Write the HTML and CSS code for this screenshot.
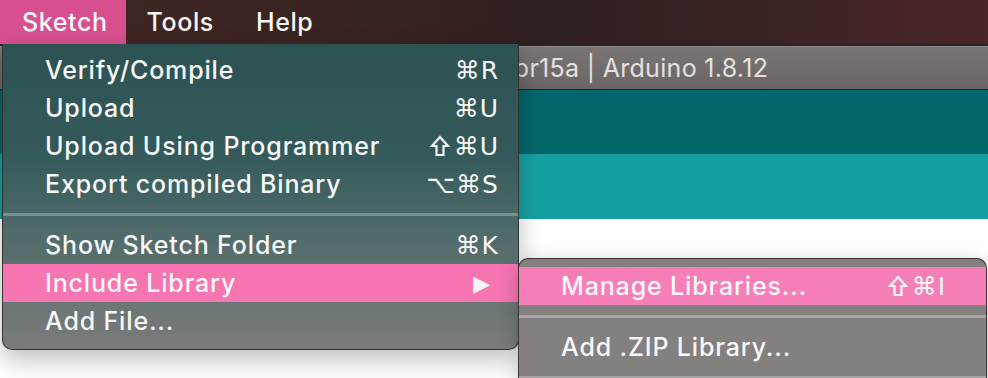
FILE: index.html
```html
<!DOCTYPE html>
<html lang="en">
<head>
  <meta charset="UTF-8">
  <title>Sketch menu | Arduino 1.8.12</title>
  <link rel="stylesheet" href="styles.css">
</head>
<body>

<div class="menubar">
  <span class="menu-title active">Sketch</span>
  <span class="menu-title">Tools</span>
  <span class="menu-title">Help</span>
</div>

<!-- the Arduino IDE window behind the menus -->
<div class="window">
  <div class="titlebar"><span class="title-text">sketch_apr15a | Arduino 1.8.12</span></div>
  <div class="toolbar"></div>
  <div class="tabs"></div>
  <div class="editor"></div>
</div>

<div class="dropdown main-menu">
  <div class="item"><span>Verify/Compile</span><span class="keys">⌘R</span></div>
  <div class="item"><span>Upload</span><span class="keys">⌘U</span></div>
  <div class="item">
    <span>Upload Using Programmer</span>
    <span class="keys"><svg class="shift" viewBox="0 0 20 22"><path d="M10 2 L18 11 H13.5 V20 H6.5 V11 H2 Z" /></svg>⌘U</span>
  </div>
  <div class="item"><span>Export compiled Binary</span><span class="keys">⌥⌘S</span></div>
  <div class="separator"></div>
  <div class="item"><span>Show Sketch Folder</span><span class="keys">⌘K</span></div>
  <div class="item selected"><span>Include Library</span><span class="arrow">▶</span></div>
  <div class="item"><span>Add File...</span></div>
</div>

<div class="dropdown sub-menu">
  <div class="item selected">
    <span>Manage Libraries...</span>
    <span class="keys"><svg class="shift" viewBox="0 0 20 22"><path d="M10 2 L18 11 H13.5 V20 H6.5 V11 H2 Z" /></svg>⌘I</span>
  </div>
  <div class="separator"></div>
  <div class="item"><span>Add .ZIP Library...</span></div>
  <div class="separator"></div>
</div>

</body>
</html>
```

FILE: styles.css
```css
body {
  margin: 0;
  width: 988px;
  height: 378px;
  overflow: hidden;
  position: relative;
  background: #fff;
  font-family: 'Inter', 'Liberation Sans', sans-serif;
  color: #f7f7f7;
}
.menubar {
  height: 44px;
  display: flex;
  align-items: stretch;
  background: linear-gradient(90deg, #422824 0%, #35221f 45%, #2c201f 55%, #4a2626 100%);
  font-size: 25px;
  font-weight: 500;
  letter-spacing: 0.6px;
}
.menu-title {
  display: flex;
  align-items: center;
  padding: 0 21px;
}
.menu-title.active {
  background: #d84f8f;
  padding: 0 18px 0 22px;
}
.window {
  border-top: 2px solid #2a2222;
}
.titlebar {
  height: 42px;
  background: linear-gradient(#7a7574, #6a6665);
  border-top: 1px solid #8e8a89;
  border-bottom: 1px solid #222;
  display: flex;
  align-items: center;
  padding-left: 408px;
  color: #e4e0df;
  font-size: 25px;
  letter-spacing: 0.3px;
  white-space: nowrap;
}
.toolbar {
  height: 64px;
  background: #03666a;
}
.tabs {
  height: 65px;
  background: #17a0a3;
}
.editor {
  height: 160px;
  background: #fff;
}
.dropdown {
  position: absolute;
  box-sizing: border-box;
  font-size: 25px;
  font-weight: 500;
  letter-spacing: 0.85px;
}
.main-menu {
  left: 2px;
  top: 44px;
  width: 517px;
  padding: 7px 0 9px;
  background: linear-gradient(#2d5252 0%, #33595a 35%, #4d6a69 60%, #6b7675 85%, #7a7b7a 100%);
  border: 1px solid #333;
  border-top: none;
  border-radius: 0 0 10px 10px;
  box-shadow: 0 10px 24px rgba(0, 0, 0, 0.25);
}
.sub-menu {
  left: 518px;
  top: 258px;
  width: 469px;
  height: 120px;
  padding-top: 8px;
  background: #858080;
  border: 1px solid #3a3636;
  border-bottom: none;
  border-radius: 10px 10px 0 0;
  box-shadow: 0 6px 20px rgba(0, 0, 0, 0.25);
}
.item {
  height: 38px;
  display: flex;
  align-items: center;
  justify-content: space-between;
  padding: 0 19px 0 42px;
}
.sub-menu .item {
  padding: 0 40px 0 42px;
}
.item.selected {
  background: #f775b1;
}
.sub-menu .item.selected {
  background: #f77fb7;
}
.keys {
  display: flex;
  align-items: center;
  gap: 2px;
  font-family: 'DejaVu Sans', sans-serif;
  font-size: 25px;
  font-weight: normal;
  letter-spacing: 1px;
}
.shift {
  width: 20px;
  height: 22px;
  margin-right: 2px;
  fill: none;
  stroke: #f7f7f7;
  stroke-width: 2.2;
  stroke-linejoin: miter;
}
.arrow {
  font-family: 'DejaVu Sans', sans-serif;
  font-size: 22px;
  margin-right: 8px;
}
.separator {
  height: 3px;
  margin: 10px 0;
  background: rgba(200, 220, 218, 0.35);
}
.sub-menu .separator {
  background: #a8a4a4;
}
```
